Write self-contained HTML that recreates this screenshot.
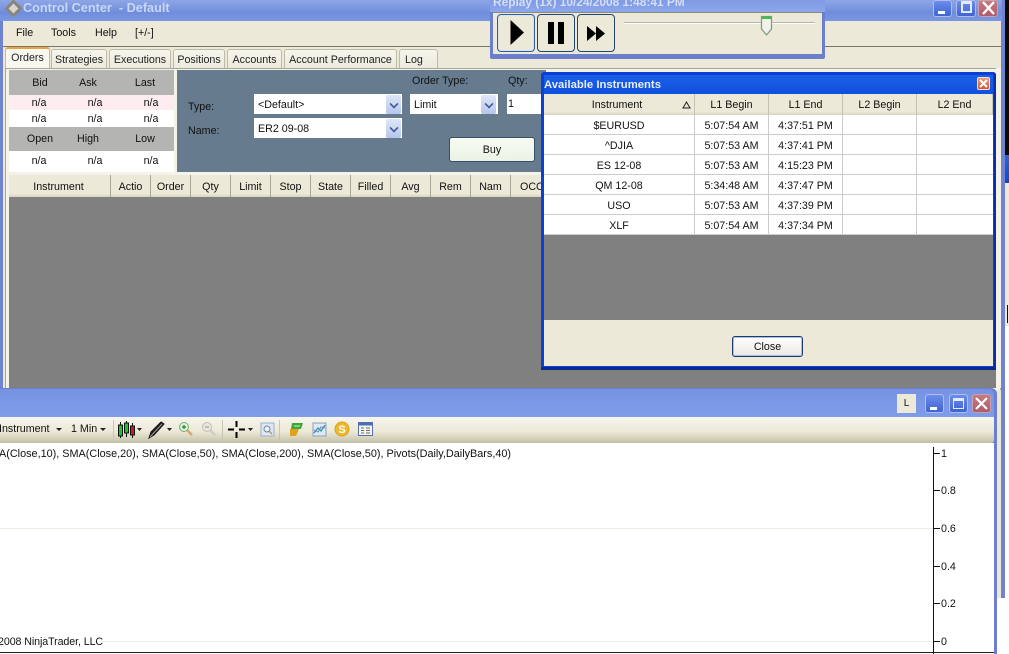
<!DOCTYPE html>
<html><head><meta charset="utf-8"><style>
html,body{margin:0;padding:0}
body{width:1009px;height:654px;position:relative;overflow:hidden;background:#fff;font:10.7px/16px "Liberation Sans",sans-serif;color:#111}
div,span,svg{position:absolute;box-sizing:border-box}
.t{white-space:nowrap;text-align:center}
.l{white-space:nowrap}
.tab{top:49px;height:20px;background:linear-gradient(#f6f5ec,#ece9dc);border:1px solid #bdbaa8;border-bottom:0;border-radius:3px 3px 0 0;text-align:center;line-height:21px;color:#222;white-space:nowrap}
.h{top:175px;height:22px;background:linear-gradient(#ece9d8,#ece9d8 85%,#d5d2bf);border-right:1px solid #a8a698;text-align:center;line-height:25px;white-space:nowrap;overflow:hidden}
.dh{top:94px;height:21px;background:linear-gradient(#ece9d8,#ece9d8 85%,#d5d2bf);border-right:1px solid #c5c2b0;text-align:center;line-height:23px}
.c{height:20px;background:#fff;border-right:1px solid #ccc;border-bottom:1px solid #ccc;text-align:center;line-height:22px;white-space:nowrap}
.win{border:1px solid #aebcf0;border-radius:3px}
.dd{width:15px;height:19px;background:linear-gradient(#dfe6f8,#b6c6ec);border-radius:2px}
.dd:after{content:"";position:absolute;left:4px;top:5px;width:6px;height:6px;border-right:2px solid #3d5a98;border-bottom:2px solid #3d5a98;transform:rotate(45deg) scale(.8)}
.pb{top:14px;width:38px;height:38px;background:#ece9d8;border:1px solid #22466e;border-radius:4px}
.tk{left:933px;width:7px;height:1px;background:#111}
</style></head><body>

<!-- far right strip -->
<div style="left:1004px;top:0;width:5px;height:155px;background:#050d08"></div>
<div style="left:1004px;top:155px;width:5px;height:28px;background:linear-gradient(#2b62d8,#1347c8)"></div>
<div style="left:1004px;top:183px;width:5px;height:143px;background:#ece9d8"></div>
<div style="left:1007px;top:305px;width:1px;height:18px;background:#111"></div>
<div style="left:1005px;top:326px;width:4px;height:328px;background:#fff"></div>

<!-- main window -->
<div style="left:0;top:0;width:1005px;height:598px;background:#6f83cf"></div>
<div style="left:0;top:0;width:1002px;height:21px;background:linear-gradient(#8ea6e6,#6f8ddd 60%,#7a97e2)"></div>
<div style="left:7px;top:2px;width:13px;height:13px;background:#d8d6cc;transform:rotate(45deg);border:3px solid #85847f"></div>
<div class="l" style="left:23px;top:0;font:bold 12.7px/17px 'Liberation Sans',sans-serif;color:#c9d6f4">Control Center&nbsp; - Default</div>
<div style="left:3px;top:21px;width:998px;height:577px;background:#ece9d8"></div>
<div class="l" style="left:16px;top:25px">File</div>
<div class="l" style="left:51px;top:25px">Tools</div>
<div class="l" style="left:95px;top:25px">Help</div>
<div class="l" style="left:135px;top:25px">[+/-]</div>
<div style="left:3px;top:46px;width:998px;height:1px;background:#77766c"></div>

<div class="tab" style="left:51px;width:56px">Strategies</div>
<div class="tab" style="left:109px;width:62px">Executions</div>
<div class="tab" style="left:173px;width:52px">Positions</div>
<div class="tab" style="left:227px;width:55px">Accounts</div>
<div class="tab" style="left:284px;width:113px">Account Performance</div>
<div class="tab" style="left:399px;width:39px;text-align:left;padding-left:5px">Log</div>
<div class="tab" style="left:5px;top:47px;width:45px;height:23px;background:#f8f7f0;border-top:2px solid #e8a33c;line-height:19px">Orders</div>

<div style="left:5px;top:68px;width:996px;height:322px;background:#f4f3ea;border:1px solid #a8a698;border-bottom:0"></div>
<!-- quote panel -->
<div style="left:9px;top:70px;width:165px;height:102px;background:#fff"></div>
<div style="left:9px;top:70px;width:165px;height:25px;background:#b4b4b2"></div>
<div style="left:9px;top:95px;width:165px;height:15px;background:#fdecf0"></div>
<div style="left:9px;top:127px;width:165px;height:24px;background:#b4b4b2"></div>
<div class="t" style="left:20px;width:40px;top:75px">Bid</div>
<div class="t" style="left:68px;width:40px;top:75px">Ask</div>
<div class="t" style="left:120px;width:50px;top:75px">Last</div>
<div class="t" style="left:19px;width:40px;top:95px">n/a</div>
<div class="t" style="left:75px;width:40px;top:95px">n/a</div>
<div class="t" style="left:131px;width:40px;top:95px">n/a</div>
<div class="t" style="left:19px;width:40px;top:111px">n/a</div>
<div class="t" style="left:75px;width:40px;top:111px">n/a</div>
<div class="t" style="left:131px;width:40px;top:111px">n/a</div>
<div class="t" style="left:20px;width:40px;top:131px">Open</div>
<div class="t" style="left:68px;width:40px;top:131px">High</div>
<div class="t" style="left:120px;width:50px;top:131px">Low</div>
<div class="t" style="left:19px;width:40px;top:153px">n/a</div>
<div class="t" style="left:75px;width:40px;top:153px">n/a</div>
<div class="t" style="left:131px;width:40px;top:153px">n/a</div>

<!-- order panel -->
<div style="left:177px;top:70px;width:369px;height:102px;background:#667b8e"></div>
<div class="l" style="left:412px;top:73px;color:#111">Order Type:</div>
<div class="l" style="left:508px;top:73px;color:#111">Qty:</div>
<div class="l" style="left:188px;top:99px">Type:</div>
<div class="l" style="left:188px;top:123px">Name:</div>
<div style="left:254px;top:94px;width:148px;height:20px;background:#fff;padding:0 0 0 4px;line-height:22px">&lt;Default&gt;</div>
<div class="dd" style="top:95px;left:386px"></div>
<div style="left:254px;top:118px;width:148px;height:20px;background:#fff;padding:0 0 0 4px;line-height:22px">ER2 09-08</div>
<div class="dd" style="left:386px;top:119px"></div>
<div style="left:410px;top:94px;width:88px;height:20px;background:#fff;padding:0 0 0 4px;line-height:22px">Limit</div>
<div class="dd" style="left:481px;top:95px"></div>
<div style="left:507px;top:94px;width:39px;height:20px;background:#fff;padding:0 0 0 1px;line-height:20px">1</div>
<div style="left:449px;top:137px;width:86px;height:25px;background:linear-gradient(#f8fcf4,#eaf3e6);border:1px solid #35506c;border-radius:3px;text-align:center;line-height:24px">Buy</div>

<!-- grid -->
<div style="left:9px;top:197px;width:987px;height:191px;background:#808080"></div>
<div style="left:996px;top:68px;width:5px;height:320px;background:#f4f3ea"></div>
<div class="h" style="left:9px;width:102px;padding-right:2px">Instrument</div>
<div class="h" style="left:111px;width:40px">Actio</div>
<div class="h" style="left:151px;width:40px">Order</div>
<div class="h" style="left:191px;width:40px">Qty</div>
<div class="h" style="left:231px;width:40px">Limit</div>
<div class="h" style="left:271px;width:40px">Stop</div>
<div class="h" style="left:311px;width:40px">State</div>
<div class="h" style="left:351px;width:40px">Filled</div>
<div class="h" style="left:391px;width:40px">Avg</div>
<div class="h" style="left:431px;width:40px">Rem</div>
<div class="h" style="left:471px;width:40px">Nam</div>
<div class="h" style="left:511px;width:34px;text-align:left;padding-left:9px;overflow:hidden">OCO</div>

<!-- main window controls -->
<div class="win" style="left:933px;top:0;width:19px;height:17px;background:linear-gradient(#6d8de8,#3d63d6)"><div style="left:4px;top:10px;width:7px;height:3px;background:#fff"></div></div>
<div class="win" style="left:956px;top:0;width:20px;height:17px;background:linear-gradient(#6d8de8,#3d63d6)"><div style="left:4px;top:0;width:11px;height:12px;border:2px solid #e4eafc;border-top-width:3px"></div></div>
<div class="win" style="left:978px;top:0;width:20px;height:17px;background:linear-gradient(#c77a7f,#ad5c6c);border-color:#c8a0b0"><svg style="left:3px;top:0" width="13" height="14"><path d="M1 1 L12 13 M12 1 L1 13" stroke="#fff" stroke-width="2.4"/></svg></div>

<!-- replay window -->
<div style="left:490px;top:0;width:335px;height:59px;background:#6b7fcb;border-radius:0 0 2px 2px"></div>
<div style="left:490px;top:0;width:335px;height:12px;background:linear-gradient(#7f9be4,#8ba6ea)"></div>
<div class="l" style="left:493px;top:-5px;font:bold 11.9px/14px 'Liberation Sans',sans-serif;color:#d5def5">Replay (1x) 10/24/2008 1:48:41 PM</div>
<div style="left:493px;top:12px;width:329px;height:42px;background:#ece9d8;border-top:1px solid #8a8a80"></div>
<div class="pb" style="left:497px;border-color:#2d5fa0;box-shadow:inset 0 0 0 1px #d9e2ee"><svg style="left:0;top:0" width="36" height="36"><path d="M12.5 5 L26 17.5 L12.5 30 Z" fill="#000"/></svg></div>
<div class="pb" style="left:537px"><svg style="left:0;top:0" width="36" height="36"><path d="M10 7h6v22h-6zM20 7h6v22h-6z" fill="#000"/></svg></div>
<div class="pb" style="left:577px"><svg style="left:0;top:0" width="36" height="36"><path d="M9 11 L18 18.500 L9 26 Z M18 11 L27 18.500 L18 26 Z" fill="#000"/></svg></div>
<div style="left:624px;top:22px;width:191px;height:2px;background:#b9b6a6;border-bottom:1px solid #fff"></div>
<svg style="left:760px;top:14px" width="13" height="23"><path d="M1.500 2.500 H11.500 V15 L6.500 21 L1.500 15 Z" fill="#f2f1ea" stroke="#7d9a7c" stroke-width="1.2"/><path d="M2 2 H11 V5 H2Z" fill="#4fb55a"/></svg>

<!-- dialog -->
<div style="left:541px;top:72px;width:455px;height:298px;background:#0b3fd6;border-right:2px solid #0a2ea8;border-bottom:3px solid #0a2a8c;border-radius:3px 3px 0 0"></div>
<div style="left:544px;top:75px;width:449px;height:19px;background:linear-gradient(#1c5fe6,#0f50de)"></div>
<div class="l" style="left:544px;top:78px;font:bold 11.3px/14px 'Liberation Sans',sans-serif;color:#e8eefc">Available Instruments</div>
<div style="left:977px;top:77px;width:13px;height:13px;background:linear-gradient(#ec9a78,#d9532c);border:1px solid #f3e2da;border-radius:2px"><svg style="left:1px;top:1px" width="9" height="9"><path d="M1 1L8 8M8 1L1 8" stroke="#fff" stroke-width="2"/></svg></div>
<div style="left:544px;top:94px;width:449px;height:226px;background:#808080"></div>
<div class="dh" style="left:544px;width:151px;padding-right:4px">Instrument<svg style="left:138px;top:7px" width="9" height="8"><path d="M4.500 1L8 7H1Z" fill="none" stroke="#222"/></svg></div>
<div class="dh" style="left:695px;width:74px">L1 Begin</div>
<div class="dh" style="left:769px;width:74px">L1 End</div>
<div class="dh" style="left:843px;width:74px">L2 Begin</div>
<div class="dh" style="left:917px;width:76px">L2 End</div>

<div class="c" style="left:544px;top:115px;width:151px">$EURUSD</div><div class="c" style="left:695px;top:115px;width:74px">5:07:54 AM</div><div class="c" style="left:769px;top:115px;width:74px">4:37:51 PM</div><div class="c" style="left:843px;top:115px;width:74px"></div><div class="c" style="left:917px;top:115px;width:76px;border-right:0"></div>
<div class="c" style="left:544px;top:135px;width:151px">^DJIA</div><div class="c" style="left:695px;top:135px;width:74px">5:07:53 AM</div><div class="c" style="left:769px;top:135px;width:74px">4:37:41 PM</div><div class="c" style="left:843px;top:135px;width:74px"></div><div class="c" style="left:917px;top:135px;width:76px;border-right:0"></div>
<div class="c" style="left:544px;top:155px;width:151px">ES 12-08</div><div class="c" style="left:695px;top:155px;width:74px">5:07:53 AM</div><div class="c" style="left:769px;top:155px;width:74px">4:15:23 PM</div><div class="c" style="left:843px;top:155px;width:74px"></div><div class="c" style="left:917px;top:155px;width:76px;border-right:0"></div>
<div class="c" style="left:544px;top:175px;width:151px">QM 12-08</div><div class="c" style="left:695px;top:175px;width:74px">5:34:48 AM</div><div class="c" style="left:769px;top:175px;width:74px">4:37:47 PM</div><div class="c" style="left:843px;top:175px;width:74px"></div><div class="c" style="left:917px;top:175px;width:76px;border-right:0"></div>
<div class="c" style="left:544px;top:195px;width:151px">USO</div><div class="c" style="left:695px;top:195px;width:74px">5:07:53 AM</div><div class="c" style="left:769px;top:195px;width:74px">4:37:39 PM</div><div class="c" style="left:843px;top:195px;width:74px"></div><div class="c" style="left:917px;top:195px;width:76px;border-right:0"></div>
<div class="c" style="left:544px;top:215px;width:151px">XLF</div><div class="c" style="left:695px;top:215px;width:74px">5:07:54 AM</div><div class="c" style="left:769px;top:215px;width:74px">4:37:34 PM</div><div class="c" style="left:843px;top:215px;width:74px"></div><div class="c" style="left:917px;top:215px;width:76px;border-right:0"></div>

<div style="left:544px;top:320px;width:449px;height:46px;background:#ece9d8"></div>
<div style="left:732px;top:336px;width:71px;height:21px;background:linear-gradient(#fff,#ece9e0);border:1px solid #1c3c70;border-radius:3px;box-shadow:inset 0 0 0 1px #a8c0e8;text-align:center;line-height:20px">Close</div>

<!-- chart window -->
<div style="left:0;top:388px;width:997px;height:266px;background:#6b80d0;border-radius:0 6px 0 0"></div>
<div style="left:0;top:389px;width:994px;height:28px;background:linear-gradient(#7592e0,#7b98e6 50%,#7f9ce8);border-radius:0 5px 0 0"></div>
<div style="left:897px;top:394px;width:19px;height:19px;background:#ece9d8;text-align:center;line-height:20px;font-size:10px">L</div>
<div class="win" style="left:925px;top:394px;width:19px;height:19px;background:linear-gradient(#6d8de8,#3d63d6)"><div style="left:4px;top:12px;width:7px;height:3px;background:#fff"></div></div>
<div class="win" style="left:949px;top:394px;width:19px;height:19px;background:linear-gradient(#6d8de8,#3d63d6)"><div style="left:3px;top:3px;width:11px;height:11px;border:1px solid #e4eafc;border-top-width:3px"></div></div>
<div class="win" style="left:972px;top:394px;width:19px;height:19px;background:linear-gradient(#c77a7f,#ad5c6c);border-color:#c8a0b0"><svg style="left:2px;top:2px" width="13" height="13"><path d="M1 1 L12 12 M12 1 L1 12" stroke="#fff" stroke-width="2.2"/></svg></div>

<div style="left:0;top:417px;width:994px;height:26px;background:linear-gradient(#f8f6ee,#ece9d8 55%,#c4c1a8);border-radius:0 0 3px 0"></div>
<div class="l" style="left:-1px;top:421px">Instrument</div>
<svg style="left:56px;top:428px" width="7" height="4"><path d="M0 0H6L3 3Z" fill="#222"/></svg>
<div class="l" style="left:71px;top:421px">1 Min</div>
<svg style="left:100px;top:428px" width="7" height="4"><path d="M0 0H6L3 3Z" fill="#222"/></svg>
<div style="left:113px;top:420px;width:1px;height:20px;background:#c8c5b4"></div>
<svg style="left:117px;top:420px" width="26" height="20"><path d="M3.500 2V18M9.500 1V17M15.500 3V18" stroke="#111"/><rect x="1.500" y="5" width="4" height="11" fill="#22c02a" stroke="#111"/><rect x="7.500" y="3" width="4" height="10" fill="#22c02a" stroke="#111"/><rect x="13.500" y="6" width="4" height="9" fill="#c02020" stroke="#111"/><path d="M20 8H25L22.500 11Z" fill="#222"/></svg>
<svg style="left:147px;top:420px" width="26" height="20"><path d="M2 18 L4 12 L14 2 L17 4 L7 15 Z" fill="#222" stroke="#111"/><path d="M3 17L15 4" stroke="#999"/><path d="M20 8H25L22.500 11Z" fill="#222"/></svg>
<svg style="left:178px;top:421px" width="16" height="16"><circle cx="6" cy="6" r="4.500" fill="#dff0df" stroke="#7aa87a"/><path d="M4 6H8M6 4V8" stroke="#2a9a2a" stroke-width="1.4"/><path d="M9.500 9.500L14 14" stroke="#d8a868" stroke-width="2.4"/></svg>
<svg style="left:201px;top:421px" width="16" height="16"><circle cx="6" cy="6" r="4.500" fill="#e8e6da" stroke="#c0bfb4"/><path d="M4 6H8" stroke="#aaa" stroke-width="1.4"/><path d="M9.500 9.500L14 14" stroke="#cfcdc2" stroke-width="2.4"/></svg>
<div style="left:222px;top:420px;width:1px;height:20px;background:#c8c5b4"></div>
<svg style="left:228px;top:420px" width="26" height="20"><path d="M0 9.500H6M11 9.500H17M8.500 1V7M8.500 12V18" stroke="#000" stroke-width="2"/><path d="M20 8H25L22.500 11Z" fill="#222"/></svg>
<svg style="left:260px;top:422px" width="15" height="15"><rect x="1" y="1" width="13" height="13" fill="#dfe8f4" stroke="#9ab0cc"/><circle cx="7" cy="7" r="3" fill="#eef3f8" stroke="#6a88a8"/><path d="M9 9L12 12" stroke="#c09060" stroke-width="1.5"/></svg>
<div style="left:279px;top:420px;width:1px;height:20px;background:#c8c5b4"></div>
<svg style="left:288px;top:421px" width="17" height="16"><path d="M4 2H15L13 8H3Z" fill="#3ca838"/><path d="M2 8H11L8 15H2Z" fill="#e0a020"/><path d="M6 5H12" stroke="#d8f0c8"/></svg>
<svg style="left:312px;top:422px" width="15" height="15"><rect x="1" y="1" width="13" height="13" fill="#dfe8f4" stroke="#8aa0bc"/><path d="M2 11L6 6L9 9L13 3" stroke="#30a0a0" stroke-width="1.3" fill="none"/><path d="M2 8L6 10L9 5L13 6" stroke="#7a86b8" fill="none"/></svg>
<svg style="left:334px;top:421px" width="16" height="16"><circle cx="8" cy="8" r="7" fill="#efb92c" stroke="#dca020"/><text x="8" y="12" font-size="11" font-weight="bold" text-anchor="middle" font-family="Liberation Sans" fill="#fff">S</text></svg>
<svg style="left:358px;top:422px" width="15" height="14"><rect x=".5" y=".5" width="14" height="13" fill="#f4f4ee" stroke="#5a70a8"/><rect x="1" y="1" width="13" height="2.500" fill="#4a6cc0"/><path d="M3 6H6M8 6H12M3 8.500H6M8 8.500H12M3 11H6M8 11H12" stroke="#6a6a6a"/></svg>

<!-- chart area -->
<div style="left:0;top:443px;width:994px;height:211px;background:#fff"></div>
<div class="l" style="left:-1px;top:446px;font-size:10.85px">A(Close,10), SMA(Close,20), SMA(Close,50), SMA(Close,200), SMA(Close,50), Pivots(Daily,DailyBars,40)</div>
<div style="left:0;top:528px;width:933px;height:1px;background:#ecebe4"></div>
<div style="left:103px;top:641px;width:830px;height:1px;background:#ecebe4"></div>
<div class="l" style="left:-2px;top:634px;letter-spacing:-.1px">2008 NinjaTrader, LLC</div>
<div style="left:0;top:652px;width:994px;height:1px;background:#222"></div>
<div style="left:933px;top:447px;width:1px;height:207px;background:#111"></div>
<div class="tk" style="top:453px"></div><div class="l" style="left:941px;top:446px">1</div>
<div class="tk" style="top:490px"></div><div class="l" style="left:941px;top:483px">0.8</div>
<div class="tk" style="top:528px"></div><div class="l" style="left:941px;top:521px">0.6</div>
<div class="tk" style="top:566px"></div><div class="l" style="left:941px;top:559px">0.4</div>
<div class="tk" style="top:603px"></div><div class="l" style="left:941px;top:596px">0.2</div>
<div class="tk" style="top:641px"></div><div class="l" style="left:941px;top:634px">0</div>
</body></html>
